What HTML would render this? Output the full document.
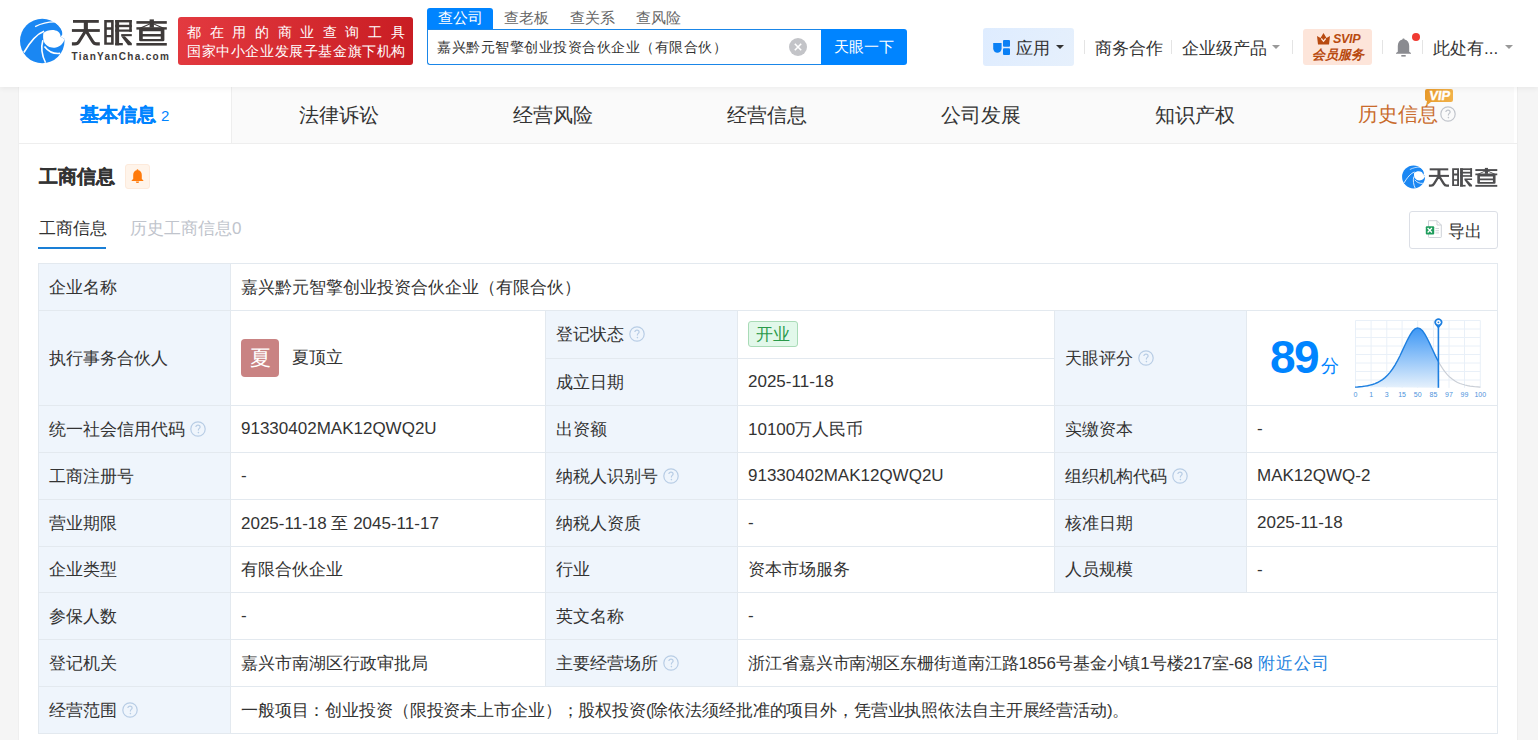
<!DOCTYPE html>
<html><head><meta charset="utf-8">
<style>
*{margin:0;padding:0;box-sizing:border-box}
html,body{width:1538px;height:740px;overflow:hidden;background:#f5f5f5;font-family:"Liberation Sans",sans-serif;color:#333}
.abs{position:absolute;white-space:nowrap}
#hdr{position:absolute;left:0;top:0;width:1538px;height:87px;background:#fff;box-shadow:0 2px 5px rgba(0,0,0,.05);z-index:5}
#card{position:absolute;left:18px;top:87px;width:1499px;height:660px;background:#fff}
.tabbar{position:absolute;left:0;top:0;width:1496px;height:57px;background:#fafafa;border-bottom:1px solid #eee}
.tab{position:absolute;top:0;height:56px;width:214px;text-align:center;font-size:20px;line-height:56px;color:#333}
.tab.active{background:#fff;color:#0084ff;font-weight:bold;-webkit-text-stroke:0.3px #0084ff;border-right:1px solid #eee}
.sep{position:absolute;top:40px;width:1px;height:14px;background:#e4e4e4}
.caret{position:absolute;width:0;height:0;border-left:4px solid transparent;border-right:4px solid transparent;border-top:4px solid #999}
table{position:absolute;left:20px;top:176px;border-collapse:collapse;table-layout:fixed}
td{border:1px solid #e3e9ef;font-size:17px;padding:0 10px;vertical-align:middle;white-space:nowrap;color:#333}
td.l{background:#eff5fc}
.q{display:inline-block;vertical-align:middle;margin-left:5px;position:relative;top:-1.5px}
</style></head>
<body>
<div id="hdr">
  <!-- logo -->
  <svg class="abs" style="left:16px;top:14px" width="54" height="54" viewBox="0 0 740 740">
    <circle cx="360" cy="370" r="305" fill="#1a87f3"/>
    <path d="M500 100 C585 140 640 205 634 280 L612 316 L668 340 L740 360 L740 0 Z" fill="#fff"/>
    <path d="M375 260 C420 220 520 200 575 240 C605 265 612 290 610 312 L668 343 C650 400 610 445 548 459 C480 470 420 450 384 384 C370 350 368 300 375 260 Z" fill="#fff"/>
    <path d="M262 172 C350 128 440 108 525 108" stroke="#fff" stroke-width="18" fill="none"/>
    <path d="M108 528 C190 390 280 275 385 238" stroke="#fff" stroke-width="22" fill="none"/>
    <path d="M405 668 C355 570 340 460 368 360" stroke="#fff" stroke-width="22" fill="none"/>
    <path d="M390 445 C440 510 520 550 605 540" stroke="#fff" stroke-width="22" fill="none"/>
  </svg>
  <svg class="abs" style="left:68px;top:14px" width="104" height="34" viewBox="0 0 104 34"><g fill="#3e3a39">
    <rect x="5" y="6" width="25.8" height="2.8"/><rect x="15.8" y="8" width="4.1" height="8"/><rect x="3.9" y="15.1" width="27.9" height="2.8"/>
    <path d="M17.85 16.5 L11.2 27.2 Q9.7 29.9 7 29.9 H3.9 M17.85 16.5 L24.5 27.2 Q26 29.9 28.7 29.9 H31.8" fill="none" stroke="#3e3a39" stroke-width="3.2"/>
    <path d="M36.2 6 H45.7 V30.7 H36.2 Z M38.8 8.4 V13.2 H43.1 V8.4 Z M38.8 15.8 V21 H43.1 V15.8 Z M38.8 23.3 V28.5 H43.1 V23.3 Z" fill-rule="evenodd"/>
    <rect x="47.2" y="6" width="3.9" height="25.3"/><rect x="47.2" y="6" width="16.6" height="2.4"/><rect x="61.2" y="6" width="2.6" height="11.7"/><rect x="47.2" y="10.8" width="16.6" height="2.4"/><rect x="47.2" y="15.5" width="16.6" height="2.2"/>
    <rect x="47.2" y="29" width="7.6" height="2.3"/><rect x="53.2" y="20.1" width="10.6" height="2.1"/>
    <path d="M53.2 22.2 L56.9 22.2 L63.8 29.2 V31.3 H60 Z"/>
    <rect x="68.4" y="7.1" width="30.4" height="2.65"/><rect x="81.6" y="5.4" width="4.3" height="8.2"/>
    <path d="M81.6 9.5 L84 9.5 L73.5 14.3 L70.5 14.3 Z M85.9 9.5 L83.5 9.5 L94 14.3 L97 14.3 Z"/>
    <rect x="68.4" y="13.2" width="30.4" height="2.4"/>
    <path d="M71.1 15.1 H96.4 V26 Q96.4 27.3 95 27.3 H72.5 Q71.1 27.3 71.1 26 Z M74.75 17.3 V20 H92.75 V17.3 Z M74.75 22.4 V25.1 H92.75 V22.4 Z" fill-rule="evenodd"/>
    <rect x="68.4" y="29" width="30.4" height="2.6"/>
  </g></svg>
  <div class="abs" style="left:71.5px;top:51px;font-size:10px;font-weight:bold;color:#3e3a39;letter-spacing:1.3px;line-height:12px">TianYanCha.com</div>
  <!-- red banner -->
  <div class="abs" style="left:178px;top:17px;width:235px;height:48px;border-radius:3px;background:linear-gradient(100deg,#e33a40,#c81c22)"></div>
  <div class="abs" style="left:187px;top:23px;font-size:14px;color:#fff;line-height:19px;letter-spacing:8.63px">都在用的商业查询工具</div>
  <div class="abs" style="left:187px;top:42px;font-size:14px;color:#fff;line-height:19px;letter-spacing:0.6px">国家中小企业发展子基金旗下机构</div>
  <!-- search tabs -->
  <div class="abs" style="left:427px;top:8px;width:66px;height:21px;background:#0084ff;border-radius:3px 3px 0 0"></div>
  <div class="abs" style="left:438px;top:8px;font-size:15px;line-height:20px;color:#fff">查公司</div>
  <div class="abs" style="left:504px;top:8px;font-size:15px;line-height:20px;color:#666">查老板</div>
  <div class="abs" style="left:570px;top:8px;font-size:15px;line-height:20px;color:#666">查关系</div>
  <div class="abs" style="left:636px;top:8px;font-size:15px;line-height:20px;color:#666">查风险</div>
  <div class="abs" style="left:427px;top:29px;width:395px;height:36px;border:1px solid #1a86e8;border-right:none;border-radius:0 0 0 3px;background:#fff"></div>
  <div class="abs" style="left:437px;top:36px;font-size:14px;letter-spacing:0.5px;line-height:22px;color:#333">嘉兴黔元智擎创业投资合伙企业（有限合伙）</div>
  <svg class="abs" style="left:789px;top:38px" width="18" height="18" viewBox="0 0 18 18"><circle cx="9" cy="9" r="9" fill="#c3c4c8"/><path d="M5.8 5.8 L12.2 12.2 M12.2 5.8 L5.8 12.2" stroke="#fff" stroke-width="1.6"/></svg>
  <div class="abs" style="left:821px;top:29px;width:86px;height:36px;background:#0084ff;border-radius:0 3px 3px 0;color:#fff;font-size:15px;line-height:36px;text-align:center">天眼一下</div>
  <!-- right nav -->
  <div class="abs" style="left:983px;top:28px;width:91px;height:38px;background:linear-gradient(120deg,#deecff,#e6f0fc);border-radius:3px"></div>
  <svg class="abs" style="left:993px;top:39px" width="18" height="17" viewBox="0 0 18 17">
    <path d="M0.2 4 H8.6 V9.5 A4.2 4.2 0 0 1 0.2 9.5 Z" fill="#0a80f5"/>
    <rect x="10" y="1" width="7" height="6.8" rx="1" fill="#0a80f5"/>
    <rect x="10" y="9.2" width="7" height="6.8" rx="1" fill="#0a80f5"/>
  </svg>
  <div class="abs" style="left:1016px;top:37px;font-size:17px;line-height:24px;color:#333">应用</div>
  <div class="caret" style="left:1056px;top:45px;border-top-color:#333"></div>
  <div class="sep" style="left:1084px"></div>
  <div class="abs" style="left:1095px;top:37px;font-size:17px;line-height:24px;color:#333">商务合作</div>
  <div class="sep" style="left:1171px"></div>
  <div class="abs" style="left:1182px;top:37px;font-size:17px;line-height:24px;color:#333">企业级产品</div>
  <div class="caret" style="left:1272px;top:45px"></div>
  <div class="sep" style="left:1292px"></div>
  <div class="abs" style="left:1303px;top:29px;width:69px;height:36px;background:#fde5da;border-radius:3px"></div>
  <svg class="abs" style="left:1317px;top:33px" width="13" height="12" viewBox="0 0 13 12"><path d="M0 3 L3.5 5 L6.5 0 L9.5 5 L13 3 L12 11.5 H1 Z" fill="#b84a10"/><path d="M4.3 5.5 L6.5 8.3 L8.7 5.5" stroke="#fde5da" stroke-width="1.3" fill="none"/></svg>
  <div class="abs" style="left:1333px;top:32px;font-size:12.5px;line-height:14px;font-weight:bold;font-style:italic;color:#b84a10;letter-spacing:-0.3px">SVIP</div>
  <div class="abs" style="left:1312px;top:47px;font-size:13px;line-height:16px;font-weight:bold;font-style:italic;color:#b84a10">会员服务</div>
  <div class="sep" style="left:1382px"></div>
  <svg class="abs" style="left:1395px;top:38px" width="17" height="19" viewBox="0 0 17 19"><path d="M8.5 0.5 C9.3 0.5 9.6 1 9.6 1.6 C12.6 2.3 14.2 4.8 14.2 8 V13.8 L16 15 V15.8 H1 V15 L2.8 13.8 V8 C2.8 4.8 4.4 2.3 7.4 1.6 C7.4 1 7.7 0.5 8.5 0.5 Z" fill="#8a8b90"/><rect x="6.3" y="17" width="4.4" height="1.6" fill="#8a8b90"/></svg>
  <div class="abs" style="left:1412px;top:33px;width:8px;height:8px;border-radius:50%;background:#f03a32"></div>
  <div class="sep" style="left:1422px"></div>
  <div class="abs" style="left:1433px;top:37px;font-size:17px;line-height:24px;color:#333">此处有...</div>
  <div class="caret" style="left:1505px;top:45px"></div>
</div>

<div id="card">
  <div class="abs" style="left:0;top:56px;width:1499px;height:1px;background:#eee"></div>
  <div class="tabbar">
    <div class="tab active" style="left:0;font-size:19px">基本信息 <span style="font-size:15px;font-weight:normal;-webkit-text-stroke:0">2</span></div>
    <div class="tab" style="left:214px">法律诉讼</div>
    <div class="tab" style="left:428px">经营风险</div>
    <div class="tab" style="left:642px">经营信息</div>
    <div class="tab" style="left:856px">公司发展</div>
    <div class="tab" style="left:1070px">知识产权</div>
    <div class="abs" style="left:1340px;top:14px;font-size:20px;line-height:26px;color:#c96b2c">历史信息</div>
    <svg class="abs" style="left:1422px;top:19px" width="16" height="16" viewBox="0 0 16 16"><circle cx="8" cy="8" r="7.2" stroke="#c0c4cb" stroke-width="1.2" fill="none"/><path d="M5.9 6.1 C5.9 4.8 6.8 4.1 8 4.1 C9.2 4.1 10.1 4.9 10.1 6 C10.1 7.3 8.4 7.5 8.4 8.9 V9.4" fill="none" stroke="#c0c4cb" stroke-width="1.2"/><circle cx="8.4" cy="11.6" r="0.8" fill="#c0c4cb"/></svg>
    <svg class="abs" style="left:1406px;top:1px" width="30" height="18" viewBox="0 0 30 18"><defs><linearGradient id="vg" x1="0" x2="1"><stop offset="0" stop-color="#e89a2a"/><stop offset="1" stop-color="#f2b24a"/></linearGradient></defs><path d="M3 1 H27 Q29 1 29 3 V12 Q29 14 27 14 H7 L2 18 L3 13 Q1 13 1 11 V3 Q1 1 3 1 Z" fill="url(#vg)"/><text x="15.5" y="12" text-anchor="middle" font-size="13" font-weight="bold" fill="#fff" stroke="#fff" stroke-width="0.4" font-family="Liberation Sans" transform="skewX(-8) translate(1.5 0)">VIP</text></svg>
  </div>
  <div class="abs" style="left:21px;top:77px;font-size:19px;font-weight:bold;line-height:26px;color:#333;-webkit-text-stroke:0.3px #333">工商信息</div>
  <div class="abs" style="left:107px;top:77px;width:25px;height:25px;border-radius:3px;background:#fff4ea;border:1px solid #fdeadb"></div>
  <svg class="abs" style="left:113px;top:82px" width="13" height="14" viewBox="0 0 13 14"><path d="M6.5 0.3 C7.1 0.3 7.4 0.7 7.4 1.2 C9.6 1.7 10.8 3.6 10.8 6 V10 L12.3 11.2 V12 H0.7 V11.2 L2.2 10 V6 C2.2 3.6 3.4 1.7 5.6 1.2 C5.6 0.7 5.9 0.3 6.5 0.3 Z" fill="#ff7a0a"/><path d="M4.8 12.5 H8.2 A1.7 1.5 0 0 1 4.8 12.5 Z" fill="#ff7a0a"/></svg>
  <svg class="abs" style="left:1382px;top:76px" width="27.9" height="27.9" viewBox="0 0 740 740">
    <circle cx="360" cy="370" r="305" fill="#1a87f3"/>
    <path d="M500 100 C585 140 640 205 634 280 L612 316 L668 340 L740 360 L740 0 Z" fill="#fff"/>
    <path d="M375 260 C420 220 520 200 575 240 C605 265 612 290 610 312 L668 343 C650 400 610 445 548 459 C480 470 420 450 384 384 C370 350 368 300 375 260 Z" fill="#fff"/>
    <path d="M262 172 C350 128 440 108 525 108" stroke="#fff" stroke-width="18" fill="none"/>
    <path d="M108 528 C190 390 280 275 385 238" stroke="#fff" stroke-width="22" fill="none"/>
    <path d="M405 668 C355 570 340 460 368 360" stroke="#fff" stroke-width="22" fill="none"/>
    <path d="M390 445 C440 510 520 550 605 540" stroke="#fff" stroke-width="22" fill="none"/>
  </svg>
  <svg class="abs" style="left:1408.1px;top:77px" width="75.1" height="24.5" viewBox="0 0 104 34"><g fill="#4d4d4f">
    <rect x="5" y="6" width="25.8" height="2.8"/><rect x="15.8" y="8" width="4.1" height="8"/><rect x="3.9" y="15.1" width="27.9" height="2.8"/>
    <path d="M17.85 16.5 L11.2 27.2 Q9.7 29.9 7 29.9 H3.9 M17.85 16.5 L24.5 27.2 Q26 29.9 28.7 29.9 H31.8" fill="none" stroke="#4d4d4f" stroke-width="3.2"/>
    <path d="M36.2 6 H45.7 V30.7 H36.2 Z M38.8 8.4 V13.2 H43.1 V8.4 Z M38.8 15.8 V21 H43.1 V15.8 Z M38.8 23.3 V28.5 H43.1 V23.3 Z" fill-rule="evenodd"/>
    <rect x="47.2" y="6" width="3.9" height="25.3"/><rect x="47.2" y="6" width="16.6" height="2.4"/><rect x="61.2" y="6" width="2.6" height="11.7"/><rect x="47.2" y="10.8" width="16.6" height="2.4"/><rect x="47.2" y="15.5" width="16.6" height="2.2"/>
    <rect x="47.2" y="29" width="7.6" height="2.3"/><rect x="53.2" y="20.1" width="10.6" height="2.1"/>
    <path d="M53.2 22.2 L56.9 22.2 L63.8 29.2 V31.3 H60 Z"/>
    <rect x="68.4" y="7.1" width="30.4" height="2.65"/><rect x="81.6" y="5.4" width="4.3" height="8.2"/>
    <path d="M81.6 9.5 L84 9.5 L73.5 14.3 L70.5 14.3 Z M85.9 9.5 L83.5 9.5 L94 14.3 L97 14.3 Z"/>
    <rect x="68.4" y="13.2" width="30.4" height="2.4"/>
    <path d="M71.1 15.1 H96.4 V26 Q96.4 27.3 95 27.3 H72.5 Q71.1 27.3 71.1 26 Z M74.75 17.3 V20 H92.75 V17.3 Z M74.75 22.4 V25.1 H92.75 V22.4 Z" fill-rule="evenodd"/>
    <rect x="68.4" y="29" width="30.4" height="2.6"/>
  </g></svg>

  <div class="abs" style="left:21px;top:131px;font-size:17px;line-height:22px;color:#333">工商信息</div>
  <div class="abs" style="left:112px;top:131px;font-size:17px;line-height:22px;color:#c0c4cc">历史工商信息0</div>
  <div class="abs" style="left:20px;top:160px;width:68px;height:2px;background:#1a7fd6"></div>
  <div class="abs" style="left:1391px;top:124px;width:89px;height:38px;border:1px solid #dcdfe6;border-radius:3px"></div>
  <svg class="abs" style="left:1407px;top:133px" width="17" height="18" viewBox="0 0 17 18"><path d="M3.5 0.7 H12 L16.3 5 V16.8 Q16.3 17.5 15.6 17.5 H4.2 Q3.5 17.5 3.5 16.8 Z" fill="#fff" stroke="#cdd1d7" stroke-width="1"/><path d="M12 0.7 V5 H16.3" fill="none" stroke="#cdd1d7" stroke-width="1"/><rect x="0.8" y="6.2" width="8.4" height="8.4" rx="1" fill="#1f9d5c"/><path d="M2.6 8 L6.9 12.5 M6.9 8 L2.6 12.5" stroke="#fff" stroke-width="1.3"/><path d="M10.5 8.5 H14 M10.5 10.7 H14 M10.5 12.9 H14" stroke="#c8ccd2" stroke-width="0.8"/></svg>
  <div class="abs" style="left:1430px;top:134px;font-size:17px;line-height:22px;color:#333">导出</div>

  <table>
    <colgroup><col style="width:192px"><col style="width:315px"><col style="width:192px"><col style="width:317px"><col style="width:192px"><col style="width:251px"></colgroup>
    <tr style="height:47px"><td class="l">企业名称</td><td colspan="5">嘉兴黔元智擎创业投资合伙企业（有限合伙）</td></tr>
    <tr style="height:48px"><td class="l" rowspan="2">执行事务合伙人</td><td rowspan="2" style="position:relative"><div class="abs" style="left:10px;top:28px;width:38px;height:38px;border-radius:4px;background:#c98383;color:#fff;font-size:21px;line-height:38px;text-align:center">夏</div><div class="abs" style="left:61px;top:35px;line-height:24px">夏顶立</div></td><td class="l">登记状态<svg class="q" width="16" height="16" viewBox="0 0 16 16"><circle cx="8" cy="8" r="7.2" fill="none" stroke="#b8cde5" stroke-width="1.2"/><path d="M5.9 6.1 C5.9 4.8 6.8 4.1 8 4.1 C9.2 4.1 10.1 4.9 10.1 6 C10.1 7.3 8.4 7.5 8.4 8.9 V9.4" fill="none" stroke="#b8cde5" stroke-width="1.2"/><circle cx="8.4" cy="11.6" r="0.8" fill="#b8cde5"/></svg></td><td><span style="display:inline-block;width:50px;height:26px;border:1px solid #a9dbb7;border-radius:3px;background:#e2f8ea;color:#2a9a4a;line-height:25px;text-align:center;vertical-align:middle;position:relative;top:-1px">开业</span></td><td class="l" rowspan="2">天眼评分<svg class="q" width="16" height="16" viewBox="0 0 16 16"><circle cx="8" cy="8" r="7.2" fill="none" stroke="#b8cde5" stroke-width="1.2"/><path d="M5.9 6.1 C5.9 4.8 6.8 4.1 8 4.1 C9.2 4.1 10.1 4.9 10.1 6 C10.1 7.3 8.4 7.5 8.4 8.9 V9.4" fill="none" stroke="#b8cde5" stroke-width="1.2"/><circle cx="8.4" cy="11.6" r="0.8" fill="#b8cde5"/></svg></td><td rowspan="2" style="position:relative">
      <div class="abs" style="left:23px;top:19px;font-size:46px;line-height:54px;font-weight:bold;color:#0084ff;letter-spacing:-1.5px">89</div>
      <div class="abs" style="left:74px;top:43px;font-size:18px;line-height:24px;color:#0084ff">分</div>
      <svg class="abs" style="left:106px;top:5px" width="140" height="88" viewBox="-2 -4 140 88">
        <defs><linearGradient id="ag" x1="0" y1="0" x2="0" y2="1"><stop offset="0" stop-color="#3d97f5"/><stop offset="1" stop-color="#e6f1fc"/></linearGradient></defs>
        <g stroke="#e9f0f8" stroke-width="1" fill="none">
          <path d="M0.5 0.5 V67.8 M16.1 0.5 V67.8 M31.8 0.5 V67.8 M47.1 0.5 V67.8 M62.7 0.5 V67.8 M78.5 0.5 V67.8 M94 0.5 V67.8 M109.5 0.5 V67.8 M125.3 0.5 V67.8"/>
          <path d="M0.5 0.5 H125.3 M0.5 9 H125.3 M0.5 17.5 H125.3 M0.5 26 H125.3 M0.5 34.5 H125.3 M0.5 43 H125.3 M0.5 51.5 H125.3 M0.5 60 H125.3"/>
        </g>
        <path d="M0.0,67.1 2.5,67.0 5.0,66.7 7.5,66.5 10.0,66.1 12.5,65.7 15.0,65.1 17.5,64.5 20.0,63.6 22.5,62.5 25.0,61.2 27.5,59.6 30.0,57.6 32.5,55.3 35.0,52.4 37.5,49.0 40.0,45.1 42.5,40.6 45.0,35.7 47.5,30.4 50.0,25.0 52.5,19.8 55.0,15.1 57.5,11.3 60.0,8.9 62.5,7.9 65.0,8.6 67.5,10.8 70.0,14.4 72.5,19.0 75.0,24.1 77.5,29.5 80.0,34.9 82.5,39.9 83.4,41.5 L83.4 67.8 Z" fill="url(#ag)"/>
        <polyline points="0.0,67.1 2.5,67.0 5.0,66.7 7.5,66.5 10.0,66.1 12.5,65.7 15.0,65.1 17.5,64.5 20.0,63.6 22.5,62.5 25.0,61.2 27.5,59.6 30.0,57.6 32.5,55.3 35.0,52.4 37.5,49.0 40.0,45.1 42.5,40.6 45.0,35.7 47.5,30.4 50.0,25.0 52.5,19.8 55.0,15.1 57.5,11.3 60.0,8.9 62.5,7.9 65.0,8.6 67.5,10.8 70.0,14.4 72.5,19.0 75.0,24.1 77.5,29.5 80.0,34.9 82.5,39.9 83.4,41.5" fill="none" stroke="#1d7fe0" stroke-width="1.4"/>
        <polyline points="83.4,41.5 85.0,44.4 87.5,48.4 90.0,51.9 92.5,54.8 95.0,57.3 97.5,59.3 100.0,61.0 102.5,62.4 105.0,63.5 107.5,64.3 110.0,65.0 112.5,65.6 115.0,66.1 117.5,66.4 120.0,66.7 122.5,66.9 125.0,67.1 125.3,67.1" fill="none" stroke="#c9ced6" stroke-width="1.1"/>
        <path d="M83.4 67.8 V6" stroke="#1d7fe0" stroke-width="1.6"/>
        <path d="M83.4 8.5 L80 4.5 A4 4 0 1 1 86.8 4.5 Z" fill="#1d7fe0"/>
        <circle cx="83.4" cy="2.3" r="2.3" fill="#fff"/><circle cx="83.4" cy="2.3" r="0.9" fill="#1d7fe0"/>
        <g font-size="7" fill="#4d93dc" text-anchor="middle" font-family="Liberation Sans">
          <text x="0.5" y="76.5">0</text><text x="16.1" y="76.5">1</text><text x="31.8" y="76.5">3</text><text x="47.1" y="76.5">15</text><text x="62.7" y="76.5">50</text><text x="78.5" y="76.5">85</text><text x="94" y="76.5">97</text><text x="109.5" y="76.5">99</text><text x="125.3" y="76.5">100</text>
        </g>
      </svg>
    </td></tr>
    <tr style="height:47px"><td class="l">成立日期</td><td>2025-11-18</td></tr>
    <tr style="height:47px"><td class="l">统一社会信用代码<svg class="q" width="16" height="16" viewBox="0 0 16 16"><circle cx="8" cy="8" r="7.2" fill="none" stroke="#b8cde5" stroke-width="1.2"/><path d="M5.9 6.1 C5.9 4.8 6.8 4.1 8 4.1 C9.2 4.1 10.1 4.9 10.1 6 C10.1 7.3 8.4 7.5 8.4 8.9 V9.4" fill="none" stroke="#b8cde5" stroke-width="1.2"/><circle cx="8.4" cy="11.6" r="0.8" fill="#b8cde5"/></svg></td><td>91330402MAK12QWQ2U</td><td class="l">出资额</td><td>10100万人民币</td><td class="l">实缴资本</td><td>-</td></tr>
    <tr style="height:47px"><td class="l">工商注册号</td><td>-</td><td class="l">纳税人识别号<svg class="q" width="16" height="16" viewBox="0 0 16 16"><circle cx="8" cy="8" r="7.2" fill="none" stroke="#b8cde5" stroke-width="1.2"/><path d="M5.9 6.1 C5.9 4.8 6.8 4.1 8 4.1 C9.2 4.1 10.1 4.9 10.1 6 C10.1 7.3 8.4 7.5 8.4 8.9 V9.4" fill="none" stroke="#b8cde5" stroke-width="1.2"/><circle cx="8.4" cy="11.6" r="0.8" fill="#b8cde5"/></svg></td><td>91330402MAK12QWQ2U</td><td class="l">组织机构代码<svg class="q" width="16" height="16" viewBox="0 0 16 16"><circle cx="8" cy="8" r="7.2" fill="none" stroke="#b8cde5" stroke-width="1.2"/><path d="M5.9 6.1 C5.9 4.8 6.8 4.1 8 4.1 C9.2 4.1 10.1 4.9 10.1 6 C10.1 7.3 8.4 7.5 8.4 8.9 V9.4" fill="none" stroke="#b8cde5" stroke-width="1.2"/><circle cx="8.4" cy="11.6" r="0.8" fill="#b8cde5"/></svg></td><td>MAK12QWQ-2</td></tr>
    <tr style="height:47px"><td class="l">营业期限</td><td>2025-11-18 至 2045-11-17</td><td class="l">纳税人资质</td><td>-</td><td class="l">核准日期</td><td>2025-11-18</td></tr>
    <tr style="height:46px"><td class="l">企业类型</td><td>有限合伙企业</td><td class="l">行业</td><td>资本市场服务</td><td class="l">人员规模</td><td>-</td></tr>
    <tr style="height:47px"><td class="l">参保人数</td><td>-</td><td class="l">英文名称</td><td colspan="3">-</td></tr>
    <tr style="height:47px"><td class="l">登记机关</td><td>嘉兴市南湖区行政审批局</td><td class="l">主要经营场所<svg class="q" width="16" height="16" viewBox="0 0 16 16"><circle cx="8" cy="8" r="7.2" fill="none" stroke="#b8cde5" stroke-width="1.2"/><path d="M5.9 6.1 C5.9 4.8 6.8 4.1 8 4.1 C9.2 4.1 10.1 4.9 10.1 6 C10.1 7.3 8.4 7.5 8.4 8.9 V9.4" fill="none" stroke="#b8cde5" stroke-width="1.2"/><circle cx="8.4" cy="11.6" r="0.8" fill="#b8cde5"/></svg></td><td colspan="3"><span style="letter-spacing:-0.1px">浙江省嘉兴市南湖区东栅街道南江路1856号基金小镇1号楼217室-68</span> <span style="color:#1f84e0;margin-left:1px;letter-spacing:0.8px">附近公司</span></td></tr>
    <tr style="height:47px"><td class="l">经营范围<svg class="q" width="16" height="16" viewBox="0 0 16 16"><circle cx="8" cy="8" r="7.2" fill="none" stroke="#b8cde5" stroke-width="1.2"/><path d="M5.9 6.1 C5.9 4.8 6.8 4.1 8 4.1 C9.2 4.1 10.1 4.9 10.1 6 C10.1 7.3 8.4 7.5 8.4 8.9 V9.4" fill="none" stroke="#b8cde5" stroke-width="1.2"/><circle cx="8.4" cy="11.6" r="0.8" fill="#b8cde5"/></svg></td><td colspan="5" style="letter-spacing:-0.13px">一般项目：创业投资（限投资未上市企业）；股权投资(除依法须经批准的项目外，凭营业执照依法自主开展经营活动)。</td></tr>
  </table>
</div>
<div class="abs" style="left:18px;top:87px;width:1px;height:653px;background:#efefef;z-index:3"></div>
<div class="abs" style="left:1517px;top:87px;width:1px;height:653px;background:#eeeeee;z-index:3"></div>
</body></html>
